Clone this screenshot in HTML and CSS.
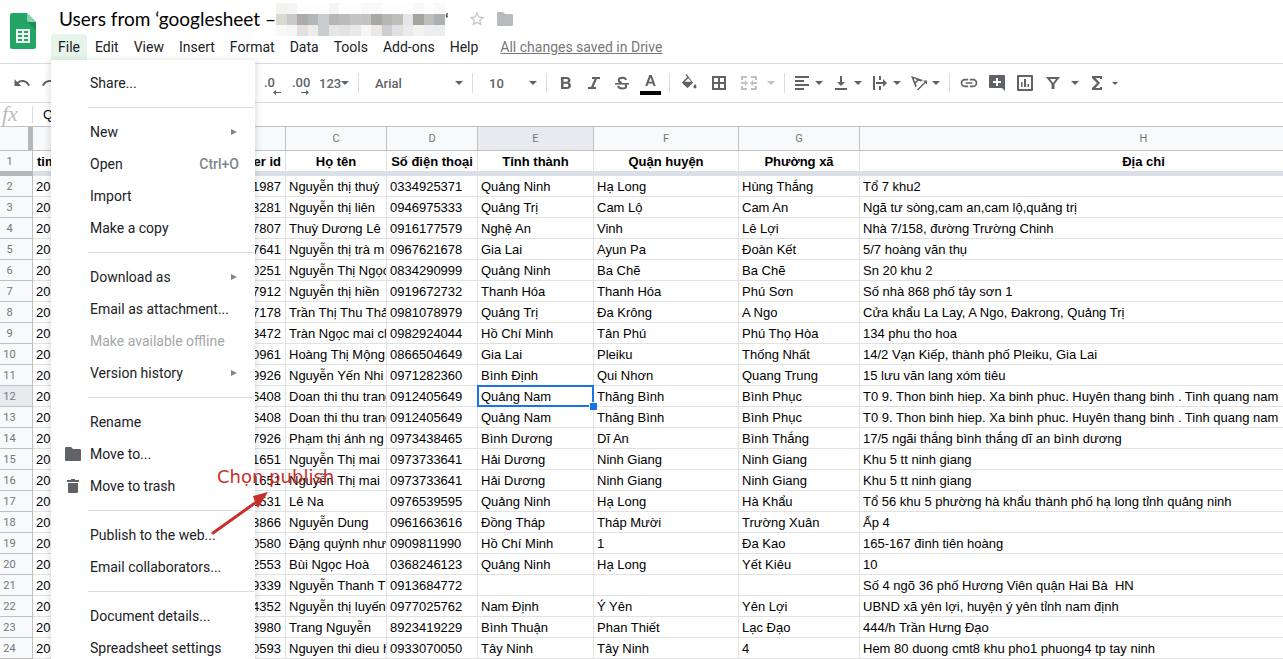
FILE: index.html
```html
<!DOCTYPE html>
<html lang="vi">
<head>
  <meta charset="UTF-8" />
  <meta name="viewport" content="width=device-width, initial-scale=1" />
  <title>Users from ‘googlesheet – Google Sheets</title>
  <link rel="stylesheet" href="styles.css">
</head>
<body>
  <header class="doc-header">
    <svg class="logo" width="26" height="36" viewBox="0 0 26 36">
      <path d="M2.500 0H17l9 9v24.500a2.500 2.500 0 0 1-2.500 2.500h-21A2.500 2.500 0 0 1 0 33.500v-31A2.500 2.500 0 0 1 2.500 0z" fill="#23a566"/>
      <path d="M17 0l9 9h-7a2 2 0 0 1-2-2z" fill="#8ed1b1"/>
      <path d="M17.500 9H26v8z" fill="#1c8f57"/>
      <path d="M6 16h14v14H6zM8 18v2h4v-2zM14 18v2h4v-2zM8 22v2h4v-2zM14 22v2h4v-2zM8 26v2h4v-2zM14 26v2h4v-2z" fill="#f1f1f1" fill-rule="evenodd"/>
    </svg>
    <div class="doc-info">
      <div class="title-row">
        <h1>Users from ‘googlesheet –</h1>
        <svg class="mosaic" width="169" height="33" viewBox="0 0 160 33" preserveAspectRatio="none" shape-rendering="crispEdges">
          <rect width="160" height="33" fill="#fdfdfd"/>
          <path d="M0 0h10v11H0z" fill="#f3f3f1"/><path d="M10 0h10v11H10z" fill="#f3f5f6"/><path d="M50 0h10v11H50z" fill="#f5f5f3"/><path d="M80 0h20v11H80z" fill="#f9f9f9"/><path d="M130 0h10v11h-10z" fill="#f8f8f7"/><path d="M150 0h10v11h-10z" fill="#f9f9f9"/>
          <path d="M0 11h10v11H0z" fill="#dcd8d2"/><path d="M10 11h10v11H10z" fill="#c7c9ca"/><path d="M20 11h10v11H20z" fill="#afabaa"/><path d="M30 11h10v11H30z" fill="#b2b7ba"/><path d="M40 11h10v22H40z" fill="#c8cdd0"/><path d="M50 11h10v11H50z" fill="#b8b6b3"/><path d="M60 11h10v11H60z" fill="#b9bbbe"/><path d="M70 11h10v11H70z" fill="#c3c5c6"/><path d="M80 11h10v11H80z" fill="#c4c2c0"/><path d="M90 11h10v11H90z" fill="#a5a8a7"/><path d="M100 11h10v11h-10z" fill="#b5b6b4"/><path d="M110 11h10v11h-10z" fill="#bebebd"/><path d="M120 11h10v11h-10z" fill="#e3e5e7"/><path d="M130 11h10v11h-10z" fill="#a3a3a0"/><path d="M140 11h10v11h-10z" fill="#bebdbb"/><path d="M150 11h10v11h-10z" fill="#adb0b2"/>
          <path d="M0 22h10v11H0z" fill="#f8f8f7"/><path d="M10 22h10v11H10z" fill="#f5f5f6"/><path d="M20 22h10v11H20z" fill="#e0e0e1"/><path d="M30 22h10v11H30z" fill="#edecea"/><path d="M50 22h10v11H50z" fill="#e6e6e6"/><path d="M60 22h10v11H60z" fill="#e2e2e2"/><path d="M70 22h10v11H70z" fill="#e8e8e7"/><path d="M80 22h10v11H80z" fill="#f5f7f6"/><path d="M90 22h10v11H90z" fill="#ece8e5"/><path d="M100 22h10v11h-10z" fill="#cbcdcf"/><path d="M110 22h10v11h-10z" fill="#e0e0e1"/><path d="M120 22h10v11h-10z" fill="#e9ebed"/><path d="M130 22h10v11h-10z" fill="#f4f2f0"/><path d="M140 22h20v11h-20z" fill="#ebedee"/>
        </svg>
        <span class="quote">‘</span>
        <button type="button" class="title-btn" aria-label="Star">
          <svg width="18" height="18" viewBox="0 0 24 24" fill="#c4c4c4"><path d="M22 9.240l-7.190-.620L12 2 9.190 8.630 2 9.240l5.460 4.730L5.820 21 12 17.270 18.180 21l-1.630-7.030L22 9.240zM12 15.400l-3.760 2.270 1-4.280-3.320-2.880 4.380-.380L12 6.100l1.710 4.040 4.380.380-3.320 2.880 1 4.280L12 15.400z"/></svg>
        </button>
        <button type="button" class="title-btn" aria-label="Move to folder">
          <svg width="16" height="14" viewBox="0 0 16 14" fill="#b9babd"><path d="M1 0h5l2 2h7a1 1 0 0 1 1 1v10a1 1 0 0 1-1 1H1a1 1 0 0 1-1-1V1a1 1 0 0 1 1-1z"/></svg>
        </button>
      </div>
      <nav class="menubar">
        <button type="button" class="active">File</button>
        <button type="button">Edit</button>
        <button type="button">View</button>
        <button type="button">Insert</button>
        <button type="button">Format</button>
        <button type="button">Data</button>
        <button type="button">Tools</button>
        <button type="button">Add-ons</button>
        <button type="button">Help</button>
        <a href="#" class="save-state">All changes saved in Drive</a>
      </nav>
    </div>

    <div class="file-menu" role="menu">
      <button type="button" role="menuitem">Share...</button>
      <hr>
      <button type="button" role="menuitem">New<span class="submenu"></span></button>
      <button type="button" role="menuitem">Open<span class="shortcut">Ctrl+O</span></button>
      <button type="button" role="menuitem">Import</button>
      <button type="button" role="menuitem">Make a copy</button>
      <hr>
      <button type="button" role="menuitem">Download as<span class="submenu"></span></button>
      <button type="button" role="menuitem">Email as attachment...</button>
      <button type="button" role="menuitem" disabled>Make available offline</button>
      <button type="button" role="menuitem">Version history<span class="submenu"></span></button>
      <hr>
      <button type="button" role="menuitem">Rename</button>
      <button type="button" role="menuitem" class="with-icon">
        <svg width="16" height="14" viewBox="0 0 16 14"><path d="M1 0h5l2 2h7a1 1 0 0 1 1 1v10a1 1 0 0 1-1 1H1a1 1 0 0 1-1-1V1a1 1 0 0 1 1-1z"/></svg>Move to...
      </button>
      <button type="button" role="menuitem" class="with-icon">
        <svg width="16" height="14" viewBox="0 0 16 14"><path d="M2 1h4V0h4v1h4v2H2zM3 4h10v9a1 1 0 0 1-1 1H4a1 1 0 0 1-1-1z"/></svg>Move to trash
      </button>
      <hr>
      <button type="button" role="menuitem">Publish to the web...</button>
      <button type="button" role="menuitem">Email collaborators...</button>
      <hr>
      <button type="button" role="menuitem">Document details...</button>
      <button type="button" role="menuitem">Spreadsheet settings</button>
    </div>
  </header>

  <div class="toolbar">
    <div class="history">
      <button type="button" aria-label="Undo"><svg width="18" height="18" viewBox="0 0 24 24"><path d="M12.500 8c-2.650 0-5.050.990-6.900 2.600L2 7v9h9l-3.620-3.620c1.390-1.160 3.160-1.880 5.120-1.880 3.540 0 6.550 2.310 7.600 5.500l2.370-.780C21.080 11.030 17.150 8 12.500 8z"/></svg></button>
      <button type="button" aria-label="Redo"><svg width="18" height="18" viewBox="0 0 24 24"><path d="M18.400 10.600C16.550 8.990 14.150 8 11.500 8c-4.650 0-8.580 3.030-9.960 7.220L3.900 16c1.050-3.190 4.050-5.500 7.600-5.500 1.950 0 3.730.720 5.120 1.880L13 16h9V7l-3.600 3.600z"/></svg></button>
    </div>
    <button type="button" class="decimals" aria-label="Decrease decimal places">.0<svg width="8" height="5" viewBox="0 0 8 5"><path d="M0 2.500L3 0v2h5v1H3v2z"/></svg></button>
    <button type="button" class="decimals" aria-label="Increase decimal places">.00<svg width="8" height="5" viewBox="0 0 8 5"><path d="M8 2.500L5 0v2H0v1h5v2z"/></svg></button>
    <button type="button" class="drop number-format">123</button>
    <span class="sep"></span>
    <label class="picker font"><select aria-label="Font"><option>Arial</option></select></label>
    <span class="sep"></span>
    <label class="picker size"><select aria-label="Font size"><option>10</option></select></label>
    <span class="sep"></span>
    <button type="button" aria-label="Bold"><svg width="18" height="18" viewBox="0 0 18 18"><path d="M4 3h5.500C12 3 13.500 4.400 13.500 6.200c0 1.100-.600 2-1.500 2.500 1.200.500 2 1.500 2 2.900C14 13.700 12.400 15 10 15H4zM6.500 5v2.800h2.700c1.100 0 1.700-.500 1.700-1.400S10.300 5 9.200 5zM6.500 9.800V13h3c1.200 0 1.900-.600 1.900-1.600s-.700-1.600-1.900-1.600z" fill-rule="evenodd"/></svg></button>
    <button type="button" aria-label="Italic"><svg width="18" height="18" viewBox="0 0 18 18"><path d="M7 3h8v2h-3l-3.500 8H11v2H3v-2h3l3.500-8H7z"/></svg></button>
    <button type="button" aria-label="Strikethrough"><svg width="18" height="18" viewBox="0 0 18 18"><path d="M2 9h14v1.600H2z"/><path d="M13 6c-.200-1.500-1.600-2.300-3.600-2.300C7.300 3.700 5.700 4.600 5.700 6.200c0 1.300 1 2 3 2.500M12 10.500c.800.400 1.200.900 1.200 1.700 0 1.500-1.500 2.300-3.800 2.300-2.400 0-4-1-4.200-2.700" fill="none" stroke="#5f6368" stroke-width="2"/></svg></button>
    <button type="button" aria-label="Text color"><svg width="21" height="24" viewBox="0 0 21 24"><path d="M9.300 4h2.400l4 11h-2.200l-.900-2.600H8.300L7.400 15H5.200zM10.500 6.600L9 10.800h3z" fill-rule="evenodd"/><path d="M0 20h21v4H0z" fill="#000"/></svg></button>
    <span class="sep"></span>
    <div class="group">
      <button type="button" aria-label="Fill color"><svg width="18" height="18" viewBox="0 0 18 18"><path d="M6.500 0L5.400 1.100l1.900 1.900L2.400 7.900a1 1 0 0 0 0 1.400l4.400 4.300a1 1 0 0 0 1.400 0l4.900-4.900zM8.200 4.300l3.300 3.400H4.800zM15 10s-1.600 1.800-1.600 2.800a1.600 1.600 0 0 0 3.200 0C16.600 11.800 15 10 15 10z" fill-rule="evenodd"/></svg></button>
      <button type="button" aria-label="Borders"><svg width="18" height="18" viewBox="0 0 18 18"><path d="M2 2h14v14H2zM4 4v4h4V4zM10 4v4h4V4zM4 10v4h4v-4zM10 10v4h4v-4z" fill-rule="evenodd"/></svg></button>
      <button type="button" class="drop wide" disabled aria-label="Merge cells"><svg width="18" height="18" viewBox="0 0 18 18"><path d="M1 2h6v2H3v2H1zM11 2h6v4h-2V4h-4zM1 12h2v2h4v2H1zM15 12h2v4h-6v-2h4zM1 8h4V6l3 3-3 3v-2H1zM17 8h-4V6l-3 3 3 3v-2h4z"/></svg></button>
    </div>
    <span class="sep tight"></span>
    <button type="button" class="drop" aria-label="Horizontal align"><svg width="18" height="18" viewBox="0 0 18 18"><path d="M2 2h14v2H2zM2 6h9v2H2zM2 10h14v2H2zM2 14h9v2H2z"/></svg></button>
    <button type="button" class="drop" aria-label="Vertical align"><svg width="18" height="18" viewBox="0 0 18 18"><path d="M3 14h12v2H3zM8 2h2v6h3l-4 4-4-4h3z"/></svg></button>
    <button type="button" class="drop" aria-label="Text wrapping"><svg width="18" height="18" viewBox="0 0 18 18"><path d="M2 2h2v14H2zM8 2h2v4H8zM8 12h2v4H8zM5 8h7V5l4 4-4 4v-3H5z"/></svg></button>
    <button type="button" class="drop" aria-label="Text rotation"><svg width="18" height="18" viewBox="0 0 18 18"><path d="M1 2l12 4-2 1.500-2.500-.8-2.700 2.700 1 2.500L5.500 13.500zM3.500 4.300l1.600 3.700 2-2z" fill-rule="evenodd"/><path d="M7 15.500l7.500-7.500-1.500-1.500h4v4l-1.500-1.500L8 16.500z"/></svg></button>
    <span class="sep"></span>
    <button type="button" aria-label="Insert link"><svg width="20" height="20" viewBox="0 0 24 24"><path d="M3.900 12c0-1.710 1.390-3.100 3.100-3.100h4V7H7c-2.760 0-5 2.240-5 5s2.240 5 5 5h4v-1.900H7c-1.710 0-3.100-1.390-3.100-3.100zM8 13h8v-2H8v2zm9-6h-4v1.900h4c1.710 0 3.100 1.390 3.100 3.100s-1.390 3.100-3.100 3.100h-4V17h4c2.760 0 5-2.240 5-5s-2.240-5-5-5z"/></svg></button>
    <button type="button" aria-label="Insert comment"><svg width="18" height="18" viewBox="0 0 18 18"><path d="M2 1h14a1 1 0 0 1 1 1v15l-3-3H2a1 1 0 0 1-1-1V2a1 1 0 0 1 1-1zM8 4v3H5v2h3v3h2V9h3V7h-3V4z" fill-rule="evenodd"/></svg></button>
    <button type="button" aria-label="Insert chart"><svg width="18" height="18" viewBox="0 0 18 18"><path d="M2 1h14a1 1 0 0 1 1 1v14a1 1 0 0 1-1 1H2a1 1 0 0 1-1-1V2a1 1 0 0 1 1-1zM3 3v12h12V3zM5 8h1.500v5H5zM8 5h2v8H8zM11.500 10H13v3h-1.500z" fill-rule="evenodd"/></svg></button>
    <button type="button" class="drop wide" aria-label="Filter"><svg width="18" height="18" viewBox="0 0 18 18"><path d="M2 3h14l-5.500 7v5h-3v-5zM6 5l3 4 3-4z" fill-rule="evenodd"/></svg></button>
    <button type="button" class="drop functions" aria-label="Functions"><svg width="18" height="18" viewBox="0 0 18 18"><path d="M4 2h10v3H12V4H7.500l4.500 5-4.500 5H12v-1h2v3H4v-2l5-5-5-5z"/></svg></button>
  </div>

  <div class="formula-bar">
    <span class="fx">fx</span>
    <input type="text" aria-label="Formula" value="Quảng Nam">
  </div>

  <main class="sheet">
    <table>
      <colgroup>
        <col class="c-num"><col class="c-a"><col class="c-b"><col class="c-c"><col class="c-d"><col class="c-e"><col class="c-f"><col class="c-g"><col class="c-h">
      </colgroup>
      <thead>
        <tr class="letters"><th class="corner"></th><th>A</th><th>B</th><th>C</th><th>D</th><th class="current">E</th><th>F</th><th>G</th><th>H</th></tr>
        <tr class="titles"><th>1</th><td class="left">timestamp</td><td class="num">user id</td><td>Họ tên</td><td>Số điện thoại</td><td>Tỉnh thành</td><td>Quận huyện</td><td>Phường xã</td><td>Địa chỉ</td></tr>
        <tr class="freeze"><th></th><td colspan="8"></td></tr>
      </thead>
      <tbody>
        <tr><th>2</th><td>2019</td><td class="num">1987</td><td>Nguyễn thị thuý</td><td>0334925371</td><td>Quảng Ninh</td><td>Hạ Long</td><td>Hùng Thắng</td><td>Tổ 7 khu2</td></tr>
        <tr><th>3</th><td>2019</td><td class="num">3281</td><td>Nguyễn thị liên</td><td>0946975333</td><td>Quảng Trị</td><td>Cam Lộ</td><td>Cam An</td><td>Ngã tư sòng,cam an,cam lộ,quảng trị</td></tr>
        <tr><th>4</th><td>2019</td><td class="num">7807</td><td>Thuỳ Dương Lê</td><td>0916177579</td><td>Nghệ An</td><td>Vinh</td><td>Lê Lợi</td><td>Nhà 7/158, đường Trường Chinh</td></tr>
        <tr><th>5</th><td>2019</td><td class="num">7641</td><td>Nguyễn thị trà m</td><td>0967621678</td><td>Gia Lai</td><td>Ayun Pa</td><td>Đoàn Kết</td><td>5/7 hoàng văn thụ</td></tr>
        <tr><th>6</th><td>2019</td><td class="num">0251</td><td>Nguyễn Thị Ngọc</td><td>0834290999</td><td>Quảng Ninh</td><td>Ba Chẽ</td><td>Ba Chẽ</td><td>Sn 20 khu 2</td></tr>
        <tr><th>7</th><td>2019</td><td class="num">7912</td><td>Nguyễn thị hiền</td><td>0919672732</td><td>Thanh Hóa</td><td>Thanh Hóa</td><td>Phú Sơn</td><td>Số nhà 868 phố tây sơn 1</td></tr>
        <tr><th>8</th><td>2019</td><td class="num">7178</td><td>Trần Thị Thu Thảo</td><td>0981078979</td><td>Quảng Trị</td><td>Đa Krông</td><td>A Ngo</td><td>Cửa khẩu La Lay, A Ngo, Đakrong, Quảng Trị</td></tr>
        <tr><th>9</th><td>2019</td><td class="num">3472</td><td>Tràn Ngọc mai chi</td><td>0982924044</td><td>Hồ Chí Minh</td><td>Tân Phú</td><td>Phú Thọ Hòa</td><td>134 phu tho hoa</td></tr>
        <tr><th>10</th><td>2019</td><td class="num">0961</td><td>Hoàng Thị Mộng</td><td>0866504649</td><td>Gia Lai</td><td>Pleiku</td><td>Thống Nhất</td><td>14/2 Vạn Kiếp, thành phố Pleiku, Gia Lai</td></tr>
        <tr><th>11</th><td>2019</td><td class="num">9926</td><td>Nguyễn Yến Nhi</td><td>0971282360</td><td>Bình Định</td><td>Qui Nhơn</td><td>Quang Trung</td><td>15 lưu văn lang xóm tiêu</td></tr>
        <tr><th class="current">12</th><td>2019</td><td class="num">6408</td><td>Doan thi thu trang</td><td>0912405649</td><td class="selected">Quảng Nam</td><td>Thăng Bình</td><td>Bình Phục</td><td>T0 9. Thon binh hiep. Xa binh phuc. Huyên thang binh . Tinh quang nam</td></tr>
        <tr><th>13</th><td>2019</td><td class="num">6408</td><td>Doan thi thu trang</td><td>0912405649</td><td>Quảng Nam</td><td>Thăng Bình</td><td>Bình Phục</td><td>T0 9. Thon binh hiep. Xa binh phuc. Huyên thang binh . Tinh quang nam</td></tr>
        <tr><th>14</th><td>2019</td><td class="num">7926</td><td>Phạm thị ánh ng</td><td>0973438465</td><td>Bình Dương</td><td>Dĩ An</td><td>Bình Thắng</td><td>17/5 ngãi thắng bình thắng dĩ an bình dương</td></tr>
        <tr><th>15</th><td>2019</td><td class="num">1651</td><td>Nguyễn Thị mai</td><td>0973733641</td><td>Hải Dương</td><td>Ninh Giang</td><td>Ninh Giang</td><td>Khu 5 tt ninh giang</td></tr>
        <tr><th>16</th><td>2019</td><td class="num">1651</td><td>Nguyễn Thị mai</td><td>0973733641</td><td>Hải Dương</td><td>Ninh Giang</td><td>Ninh Giang</td><td>Khu 5 tt ninh giang</td></tr>
        <tr><th>17</th><td>2019</td><td class="num">6531</td><td>Lê Na</td><td>0976539595</td><td>Quảng Ninh</td><td>Hạ Long</td><td>Hà Khẩu</td><td>Tổ 56 khu 5 phường hà khẩu thành phố hạ long tỉnh quảng ninh</td></tr>
        <tr><th>18</th><td>2019</td><td class="num">3866</td><td>Nguyễn Dung</td><td>0961663616</td><td>Đồng Tháp</td><td>Tháp Mười</td><td>Trường Xuân</td><td>Ấp 4</td></tr>
        <tr><th>19</th><td>2019</td><td class="num">0580</td><td>Đặng quỳnh như</td><td>0909811990</td><td>Hồ Chí Minh</td><td>1</td><td>Đa Kao</td><td>165-167 đinh tiên hoàng</td></tr>
        <tr><th>20</th><td>2019</td><td class="num">2553</td><td>Bùi Ngọc Hoà</td><td>0368246123</td><td>Quảng Ninh</td><td>Hạ Long</td><td>Yết Kiêu</td><td>10</td></tr>
        <tr><th>21</th><td>2019</td><td class="num">9339</td><td>Nguyễn Thanh T</td><td>0913684772</td><td></td><td></td><td></td><td>Số 4 ngõ 36 phố Hương Viên quận Hai Bà  HN</td></tr>
        <tr><th>22</th><td>2019</td><td class="num">4352</td><td>Nguyễn thị luyến</td><td>0977025762</td><td>Nam Định</td><td>Ý Yên</td><td>Yên Lợi</td><td>UBND xã yên lợi, huyện ý yên tỉnh nam định</td></tr>
        <tr><th>23</th><td>2019</td><td class="num">3980</td><td>Trang Nguyễn</td><td>8923419229</td><td>Bình Thuận</td><td>Phan Thiết</td><td>Lạc Đạo</td><td>444/h Trần Hưng Đạo</td></tr>
        <tr><th>24</th><td>2019</td><td class="num">0593</td><td>Nguyen thi dieu huong</td><td>0933070050</td><td>Tây Ninh</td><td>Tây Ninh</td><td>4</td><td>Hem 80 duong cmt8 khu pho1 phuong4 tp tay ninh</td></tr>
      </tbody>
    </table>
  </main>

  <div class="note">
    <span>Chọn publish</span>
    <svg width="60" height="46" viewBox="0 0 60 46"><path d="M2 43L44 13" stroke="#c5302a" stroke-width="3" stroke-linecap="round"/><path d="M57 2L42 6l2 6 3 6z" fill="#c5302a"/></svg>
  </div>
</body>
</html>
```
FILE: styles.css
```css
* {
  box-sizing: border-box;
}
body {
  margin: 0;
  height: 100vh;
  overflow: hidden;
  position: relative;
  display: flex;
  flex-direction: column;
  background-color: #fff;
  color: #202124;
  font-family: Roboto, sans-serif;
}
button, select, input {
  font-family: inherit;
  border: 0;
  margin: 0;
  padding: 0;
  background: transparent;
  color: inherit;
}

/* title and menu bar */
.doc-header {
  position: relative;
  display: flex;
  flex-shrink: 0;
  height: 64px;
  padding-left: 10px;
  border-bottom: 1px solid #dadce0;
}
.logo {
  margin-top: 13px;
}
.doc-info {
  margin-left: 15px;
}
.title-row {
  display: flex;
  align-items: center;
  height: 34px;
  padding: 4px 0 0 8px;
}
h1 {
  margin: 0;
  font-family: Lato, sans-serif;
  font-size: 19px;
  font-weight: normal;
  line-height: 32px;
  color: #000;
  white-space: nowrap;
}
.mosaic {
  flex-shrink: 0;
}
.quote {
  font-family: Lato, sans-serif;
  font-size: 18px;
  width: 18px;
}
.title-btn {
  display: flex;
  width: 28px;
  justify-content: center;
  align-items: center;
}
.menubar {
  display: flex;
  align-items: center;
  gap: 1px;
  height: 26px;
}
.menubar button {
  height: 26px;
  padding: 0 7px;
  font-size: 14px;
  border-radius: 4px 4px 0 0;
}
.menubar .active {
  background-color: #e6f4ea;
}
.save-state {
  margin-left: 14px;
  font-size: 14px;
  color: #777;
}

/* open File menu */
.file-menu {
  position: absolute;
  z-index: 2;
  left: 51px;
  top: 60px;
  width: 204px;
  padding: 7px 0;
  background-color: #fff;
  box-shadow: 0 2px 6px 2px rgba(60, 64, 67, 0.15);
}
.file-menu button {
  display: flex;
  align-items: center;
  width: 100%;
  height: 32px;
  padding: 0 16px 0 39px;
  font-size: 14px;
  text-align: left;
}
.file-menu button:disabled {
  color: #a5a7aa;
}
.file-menu .with-icon {
  padding-left: 14px;
  gap: 9px;
}
.file-menu hr {
  margin: 8px 1px 8px 37px;
  border: 0;
  border-top: 1px solid #dadce0;
}
.shortcut {
  margin-left: auto;
  font-weight: 500;
  color: #80868b;
}
.submenu {
  margin-left: auto;
  margin-right: 2px;
  border: 3px solid transparent;
  border-left: 6px solid #80868b;
  border-right: 0;
}

/* toolbar */
.toolbar {
  display: flex;
  align-items: center;
  flex-shrink: 0;
  height: 39px;
  border-bottom: 1px solid #dadce0;
  color: #5f6368;
}
.toolbar svg, .file-menu svg {
  fill: #5f6368;
  flex-shrink: 0;
}
.toolbar button {
  display: flex;
  align-items: center;
  justify-content: center;
  flex-shrink: 0;
  width: 28px;
  height: 26px;
  font-size: 13px;
  font-weight: 500;
}
.toolbar .history {
  display: flex;
  width: 258px;
  padding-left: 8px;
}
.toolbar .decimals {
  flex-direction: column;
  align-items: flex-start;
  padding: 5px 0 0 6px;
  line-height: 14px;
}
.toolbar .decimals svg {
  align-self: flex-end;
  margin-right: 5px;
}
.toolbar .drop {
  width: 39px;
  padding: 0 4px 0 5px;
  justify-content: space-between;
}
.toolbar .wide {
  width: 44px;
}
.drop::after, .picker::after {
  content: "";
  border: 4px solid transparent;
  border-top-color: #5f6368;
  border-bottom: 0;
}
.toolbar .functions::after {
  border-width: 3px 3px 0;
}
.toolbar button:disabled {
  opacity: 0.4;
}
.group {
  display: flex;
  gap: 2px;
}
.sep {
  flex-shrink: 0;
  width: 1px;
  height: 20px;
  margin: 0 5px;
  background-color: #dadce0;
}
.tight {
  margin-right: 3px;
}
.picker {
  display: flex;
  align-items: center;
  flex-shrink: 0;
  padding: 0 4px 0 11px;
}
.picker select {
  appearance: none;
  flex: 1;
  min-width: 0;
  font-size: 13px;
  font-weight: 500;
}
.font {
  width: 103px;
}
.size {
  width: 63px;
}

/* formula bar */
.formula-bar {
  display: flex;
  align-items: center;
  flex-shrink: 0;
  height: 23px;
}
.fx {
  width: 33px;
  height: 17px;
  padding-left: 2px;
  border-right: 1px solid #dadce0;
  font-family: "Liberation Serif", serif;
  font-size: 22px;
  font-style: italic;
  line-height: 15px;
  color: #bbb;
}
.formula-bar input {
  flex: 1;
  padding-left: 10px;
  font-family: "Liberation Sans", Arial, sans-serif;
  font-size: 13px;
  color: #000;
}

/* grid */
.sheet {
  flex: 1;
  min-height: 0;
  overflow: hidden;
}
table {
  width: 1428px;
  table-layout: fixed;
  border-collapse: separate;
  border-spacing: 0;
  border-top: 1px solid #c0c0c0;
}
.c-num { width: 33px; }
.c-a { width: 120px; }
.c-b { width: 133px; }
.c-c { width: 101px; }
.c-d { width: 91px; }
.c-e { width: 116px; }
.c-f { width: 145px; }
.c-g { width: 121px; }
.c-h { width: 568px; }
td {
  height: 21px;
  padding: 2px 3px 0;
  overflow: hidden;
  border-right: 1px solid #e1e1e1;
  border-bottom: 1px solid #e1e1e1;
  font-family: "Liberation Sans", Arial, sans-serif;
  font-size: 13px;
  line-height: 18px;
  white-space: pre;
  color: #000;
}
th {
  padding: 0;
  border-right: 1px solid #c0c0c0;
  border-bottom: 1px solid #c0c0c0;
  background-color: #f8f9fa;
  font-size: 11px;
  font-weight: normal;
  line-height: 18px;
  color: #72777c;
}
tbody th, .titles th {
  padding: 2px 13px 0 0;
}
.letters th {
  height: 24px;
}
.letters .corner {
  border-right: 5px solid #b7b7b7;
}
.letters .current, tbody .current {
  background-color: #e8eaed;
}
.num {
  text-align: right;
  padding-right: 4px;
}
.titles td {
  height: 20px;
  border-bottom: 0;
  font-weight: bold;
  text-align: center;
}
.titles th {
  border-bottom: 0;
}
.titles .left {
  padding-left: 4px;
  text-align: left;
}
.titles .num {
  text-align: right;
}
.freeze th, .freeze td {
  height: 5px;
  padding: 0;
  border: 0;
  line-height: 0;
  background-color: #dadfe8;
}
.freeze th {
  background-color: #b7b7b7;
}
.selected {
  position: relative;
  overflow: visible;
}
.selected::before {
  content: "";
  position: absolute;
  inset: -1px;
  border: 2px solid #1a73e8;
}
.selected::after {
  content: "";
  position: absolute;
  right: -4px;
  bottom: -4px;
  width: 7px;
  height: 7px;
  border: 1px solid #fff;
  border-width: 1px 0 0 1px;
  background-color: #1a73e8;
}

/* red callout over the menu and the grid */
.note {
  position: absolute;
  z-index: 3;
  left: 217px;
  top: 465px;
  font-family: "DejaVu Sans", sans-serif;
  font-size: 18px;
  line-height: 24px;
  color: #c5302a;
}
.note svg {
  position: absolute;
  left: -6px;
  top: 25px;
}
```
